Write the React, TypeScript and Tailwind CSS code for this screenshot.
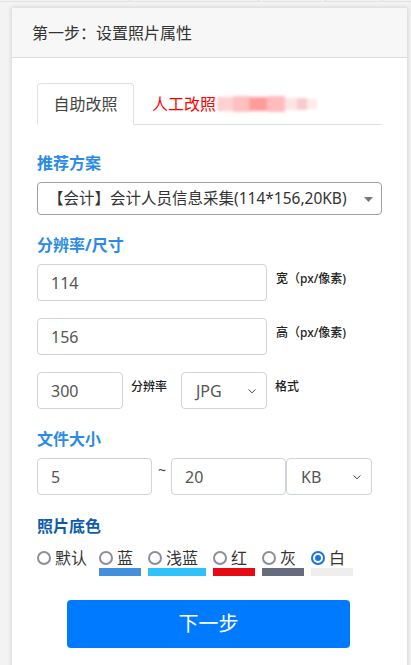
import React from "react"

const font = "font-['Noto_Sans','Noto_Sans_CJK_SC',sans-serif]"

function Chevron() {
  return (
    <svg className="pointer-events-none absolute right-[9px] top-1/2 -translate-y-1/2" width="10" height="10" viewBox="0 0 16 16">
      <path d="M3 6l5 5 5-5" fill="none" stroke="#444" strokeWidth="1.6" strokeLinecap="round" strokeLinejoin="round" />
    </svg>
  )
}

function Field({ value, width }: { value: string; width: string }) {
  return (
    <div className={`${width} flex h-[37px] items-center rounded-[4px] border border-[#ced4da] bg-white pl-[13px] text-base text-[#555]`}>
      {value}
    </div>
  )
}

function Select({ value, width }: { value: string; width: string }) {
  return (
    <div className={`${width} relative flex h-[37px] items-center rounded-[4px] border border-[#ced4da] bg-white pl-[14px] text-base text-[#555]`}>
      {value}
      <Chevron />
    </div>
  )
}

function Heading({ children, className = "" }: { children: React.ReactNode; className?: string }) {
  return <div className={`h-[24px] text-base font-bold leading-[24px] ${className}`}>{children}</div>
}

const swatches = [
  { label: "默认", width: "w-[62px]", bar: "" },
  { label: "蓝", width: "w-[49px]", bar: "w-[42px] bg-[#428fdb]" },
  { label: "浅蓝", width: "w-[65px]", bar: "w-[58px] bg-[#2ec1fb]" },
  { label: "红", width: "w-[49px]", bar: "w-[42px] bg-[#e60a14]" },
  { label: "灰", width: "w-[49px]", bar: "w-[42px] bg-[#666b7e]" },
  { label: "白", width: "w-[49px]", bar: "w-[42px] bg-[#eeeeee]", checked: true },
]

export default function App() {
  return (
    <div className={`min-h-screen bg-[#f3f3f3] ${font}`}>
      {/* leftover row from above */}
      <div className="flex h-[2px] border-b border-[#e2e2e2]">
        <div className="w-[130px] border-r border-[#d8d8d8]" />
        <div className="w-[129px] border-r border-[#d8d8d8]" />
        <div className="w-[67px] border-r border-[#d8d8d8]" />
        <div className="w-[57px] border-r border-[#d8d8d8]" />
      </div>

      <div className="ml-[11px] mt-[5px] w-[397px] rounded-t-[3px] border border-[#e2e2e2] bg-white shadow-[0_0_4px_rgba(0,0,0,0.12)]">
        <div className="flex h-[50px] items-center border-b border-[#dddddd] bg-[#f7f7f7] pl-[20px] text-base text-[#333]">
          第一步：设置照片属性
        </div>

        <div className="px-[25px] pb-[30px]">
          {/* tabs */}
          <div className="mt-[25px] flex h-[42px] border-b border-[#dee2e6]">
            <div className="-mb-px flex w-[97px] items-center justify-center rounded-t-[4px] border border-b-white border-[#dee2e6] bg-white text-base text-[#444]">
              自助改照
            </div>
            <div className="ml-[18px] flex items-center text-base text-[#ff0000]">
              人工改照
              <div className="ml-[1px] flex h-[20px] items-center blur-[1.5px]">
                <span className="h-[14px] w-[16px] bg-[#ffd0d0]" />
                <span className="h-[16px] w-[16px] bg-[#ffc0c0]" />
                <span className="h-[14px] w-[18px] bg-[#ff9d9d]" />
                <span className="h-[16px] w-[18px] bg-[#ffbcbc]" />
                <span className="h-[12px] w-[12px] bg-[#ffe4e4]" />
                <span className="h-[12px] w-[10px] bg-[#f8cad0]" />
                <span className="h-[10px] w-[10px] bg-[#ffe8e8]" />
              </div>
            </div>
          </div>

          <Heading className="mt-[26px] text-[#2a8be6]">推荐方案</Heading>
          <div className="relative mt-[7px] flex h-[33px] items-center rounded-[4px] border border-[#a0a0a0] pl-[10px] text-[15.5px] text-[#333]">
            【会计】会计人员信息采集(114*156,20KB)
            <svg className="absolute right-[8px] top-[14px]" width="9" height="5" viewBox="0 0 9 5">
              <path d="M0 0h9L4.5 5z" fill="#777" />
            </svg>
          </div>

          <Heading className="mt-[18px] text-[#2a8be6]">分辨率/尺寸</Heading>
          <div className="mt-[7px] flex items-start">
            <Field value="114" width="w-[230px]" />
            <div className="ml-[9px] mt-[6px] text-xs font-medium leading-[18px] text-[#222]">宽（px/像素)</div>
          </div>
          <div className="mt-[17px] flex items-start">
            <Field value="156" width="w-[230px]" />
            <div className="ml-[9px] mt-[6px] text-xs font-medium leading-[18px] text-[#222]">高（px/像素)</div>
          </div>
          <div className="mt-[17px] flex items-start">
            <Field value="300" width="w-[86px]" />
            <div className="ml-[8px] mt-[6px] w-[50px] text-xs font-medium leading-[18px] text-[#222]">分辨率</div>
            <Select value="JPG" width="w-[86px]" />
            <div className="ml-[8px] mt-[6px] text-xs font-medium leading-[18px] text-[#222]">格式</div>
          </div>

          <Heading className="mt-[18px] text-[#2a8be6]">文件大小</Heading>
          <div className="mt-[7px] flex items-start">
            <Field value="5" width="w-[115px]" />
            <div className="w-[19px] pl-[6px] pt-[3px] text-sm leading-[18px] text-[#444]">~</div>
            <Field value="20" width="w-[115px]" />
            <Select value="KB" width="w-[86px]" />
          </div>

          <Heading className="mt-[19px] text-[#0d5cab]">照片底色</Heading>
          <div className="mt-[10px] flex">
            {swatches.map((s) => (
              <div key={s.label} className={`${s.width} flex flex-col`}>
                <div className="flex h-[20px] items-center text-base leading-[20px] text-[#333]">
                  {s.checked ? (
                    <span className="flex h-[14px] w-[14px] items-center justify-center rounded-full border-2 border-[#1a73e8]">
                      <span className="h-[6px] w-[6px] rounded-full bg-[#1a73e8]" />
                    </span>
                  ) : (
                    <span className="h-[14px] w-[14px] rounded-full border-2 border-[#8e8e9b]" />
                  )}
                  <span className="ml-[4px]">{s.label}</span>
                </div>
                {s.bar && <div className={`h-[8px] ${s.bar}`} />}
              </div>
            ))}
          </div>

          <div className="mt-[24px] flex justify-center">
            <button className="ml-[-2px] flex h-[48px] w-[283px] items-center justify-center rounded-[4px] bg-[#007bff] text-xl text-white">
              下一步
            </button>
          </div>
        </div>
      </div>
    </div>
  )
}
